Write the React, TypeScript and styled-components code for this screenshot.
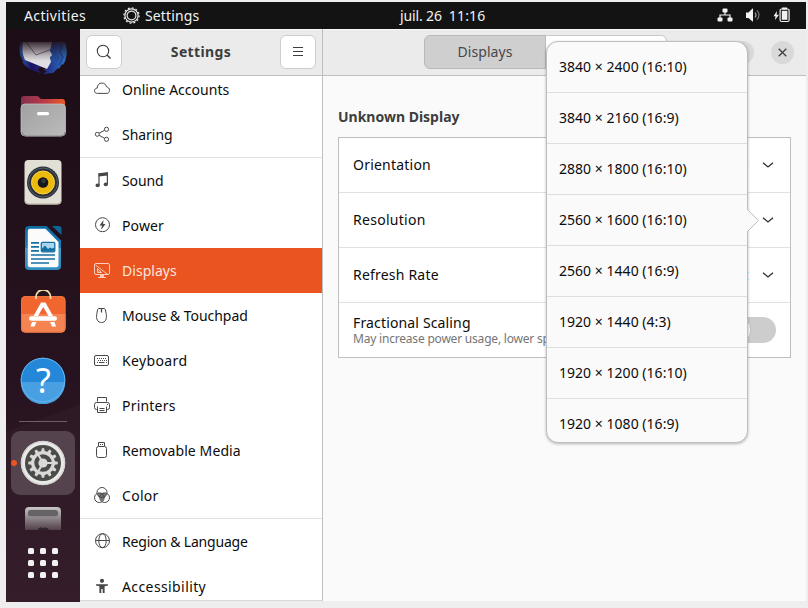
import React from 'react';
import styled, { createGlobalStyle } from 'styled-components';

const GlobalStyle = createGlobalStyle`
  * { box-sizing: border-box; }
  body { margin: 0; background: #eeeeee; font-family: "Noto Sans", "Open Sans", sans-serif; font-size: 14px; color: #0c0c0c; }
  svg { display: block; flex: none; }
`;

const Page = styled.div`
  width: 808px;
  height: 608px;
  padding: 2px 2px 6px 6px;
  overflow: hidden;
`;

const Screen = styled.div`
  position: relative;
  display: flex;
  flex-direction: column;
  width: 800px;
  height: 600px;
  overflow: hidden;
`;

const Label = styled.span<{ $track?: number }>`
  letter-spacing: ${(p) => p.$track ?? 0}px;
  line-height: 20px;
  white-space: pre;
`;

/* ---------- top bar ---------- */

const TopBar = styled.header`
  display: flex;
  align-items: center;
  flex: none;
  height: 27px;
  padding: 0 16px 0 18px;
  background: #131313;
  color: #f2f2f2;
`;

const Activities = styled.div`
  width: 99px;
`;

const AppMenu = styled.div`
  display: flex;
  align-items: center;
  gap: 5px;
  width: 277px;
`;

const Clock = styled.div`
  display: flex;
  gap: 7px;
`;

const Tray = styled.div`
  display: flex;
  align-items: center;
  gap: 12px;
  margin: 0 0 1px auto;
`;

/* ---------- dock ---------- */

const Workspace = styled.div`
  display: flex;
  flex: 1;
  min-height: 0;
`;

const Dock = styled.nav`
  display: flex;
  flex-direction: column;
  align-items: center;
  width: 74px;
  background: linear-gradient(160deg, transparent 67%, rgba(255, 255, 255, 0.025) 67.2%),
    linear-gradient(180deg, #1c0d16 0%, #25121e 50%, #301825 100%);
`;

const Favourites = styled.div`
  display: flex;
  flex-direction: column;
  gap: 18px;
`;

const DockDivider = styled.div`
  width: 48px;
  height: 1px;
  margin: 17px 0 9px;
  background: #6c5f67;
`;

const ActiveApp = styled.div`
  display: flex;
  align-items: center;
  width: 64px;
  height: 64px;
  margin-bottom: 11px;
  border-radius: 9px;
  background: #54424c;
`;

const RunningDot = styled.div`
  width: 6px;
  height: 6px;
  margin-right: 3px;
  border-radius: 50%;
  background: #e95420;
`;

const AppsGrid = styled.div`
  display: grid;
  grid-template-columns: repeat(3, 6px);
  gap: 6px;
  margin-top: 18px;
`;

const GridDot = styled.i`
  height: 6px;
  border-radius: 1.5px;
  background: #f2f2f2;
`;

/* ---------- window ---------- */

const Pane = styled.section`
  display: flex;
  flex-direction: column;
  flex: 1;
  min-width: 0;
  height: 572px;
  background: #fafafa;
`;

const Sidebar = styled(Pane)`
  flex: none;
  width: 243px;
  background: #ffffff;
  border-right: 1px solid #bfbfbf;
  border-bottom: 1px solid #d8d8d8;
`;

const HeaderBar = styled.div`
  display: flex;
  align-items: center;
  justify-content: space-between;
  flex: none;
  height: 47px;
  padding: 0 6px;
  background: #ebebeb;
  border-bottom: 1px solid #bfbfbf;
  box-shadow: inset 0 1px #f9f9f9;
`;

const Title = styled(Label)`
  font-weight: 700;
  color: #3d3d3d;
`;

const IconButton = styled.button`
  display: grid;
  place-items: center;
  width: 36px;
  height: 34px;
  padding: 0;
  border: 1px solid #cdcdcd;
  border-radius: 6px;
  background: #ffffff;
`;

const CategoryList = styled.ul`
  flex: 1;
  min-height: 0;
  margin: 0;
  padding: 0;
  overflow: hidden;
  list-style: none;
`;

const Category = styled.li<{ $active?: boolean; $ruled?: boolean; $first?: boolean }>`
  display: flex;
  align-items: flex-start;
  gap: 12px;
  height: ${(p) => (p.$ruled ? 46 : 45)}px;
  margin-top: ${(p) => (p.$first ? -9 : 0)}px;
  padding: 14px 0 0 14px;
  border-bottom: ${(p) => (p.$ruled ? '1px solid #e1e1e1' : 'none')};
  background: ${(p) => (p.$active ? '#e95420' : 'transparent')};
  color: ${(p) => (p.$active ? '#fbe6de' : '#0c0c0c')};

  svg { color: ${(p) => (p.$active ? '#f8cdbd' : '#484848')}; }
  span { margin-top: -1px; }
`;

const MainHeader = styled(HeaderBar)`
  justify-content: flex-start;
  padding: 0 12px 0 101px;
`;

const Segment = styled.div<{ $on?: boolean }>`
  display: grid;
  place-items: center;
  width: ${(p) => (p.$on ? 122 : 121)}px;
  height: 34px;
  border: 1px solid #b9b9b9;
  border-left-width: ${(p) => (p.$on ? 1 : 0)}px;
  border-color: ${(p) => (p.$on ? '#b9b9b9' : '#c9c9c9')};
  border-radius: ${(p) => (p.$on ? '6px 0 0 6px' : '0 6px 6px 0')};
  background: ${(p) => (p.$on ? '#cfcfcf' : '#ffffff')};
  color: #484848;
`;

const WindowControls = styled.div`
  display: flex;
  gap: 17px;
  margin-left: auto;
`;

const ControlButton = styled.button`
  display: grid;
  place-items: center;
  width: 23px;
  height: 23px;
  padding: 0;
  border: 0;
  border-radius: 50%;
  background: #d9d9d9;
`;

const Content = styled.div`
  padding: 31px 15px 0;
`;

const Heading = styled(Title)`
  display: block;
`;

const SettingsCard = styled.div`
  margin-top: 10px;
  border: 1px solid #bfbfbf;
  background: #ffffff;
`;

const SettingRow = styled.div`
  display: flex;
  align-items: center;
  height: 55px;
  padding: 0 16px 0 14px;
  border-bottom: 1px solid #e1e1e1;

  &:last-child { height: 54px; border-bottom: 0; padding-right: 14px; }
`;

const SettingText = styled.div`
  display: flex;
  flex-direction: column;
  flex: 1;
`;

const RowTitle = styled(Label)`
  line-height: 18px;
`;

const Hint = styled(Label)`
  font-size: 12px;
  line-height: 14px;
  color: #757575;
`;

const Value = styled(Label)`
  margin-right: 13.5px;
  color: #1a73c0;
`;

const Switch = styled.div`
  width: 48px;
  height: 26px;
  border-radius: 13px;
  background: #cdcdcd;
`;

const Knob = styled.div`
  width: 23px;
  height: 26px;
  border: 1px solid #c0c0c0;
  border-radius: 12px;
  background: #f6f6f6;
`;

/* ---------- resolution menu ---------- */

const Popover = styled.div`
  position: absolute;
  left: 540px;
  top: 39px;
  width: 202px;
  height: 402px;
  border: 1px solid #bebebe;
  border-radius: 12px;
  background: #fafafa;
  box-shadow: 0 1px 3px rgba(0, 0, 0, 0.28);
`;

const Options = styled.div`
  height: 400px;
  overflow: hidden;
  border-radius: 11px;
`;

const Option = styled.div`
  display: flex;
  align-items: center;
  height: 51px;
  padding-left: 12px;
  border-bottom: 1px solid #dedede;
`;

const Arrow = styled.svg`
  position: absolute;
  left: 199px;
  top: 166px;
`;

/* ---------- icons ---------- */

const Line = ({ children }: { children: React.ReactNode }) => (
  <svg width="16" height="16" viewBox="0 0 16 16" fill="none" stroke="currentColor" strokeWidth="1">
    {children}
  </svg>
);

const icons = {
  cloud: (
    <Line>
      <path d="M3.500 12.400C1.600 12.400.5 11.300.5 9.700.5 8.200 1.700 7.200 3.200 7.100 3.200 4 5.200 2 7.900 2c2.400 0 4 1.500 4.600 3.800 1.900.300 3 1.800 3 3.400 0 2-1 3.200-2.600 3.200z" />
    </Line>
  ),
  share: (
    <Line>
      <circle cx="3.300" cy="8.300" r="2" />
      <circle cx="12.500" cy="3.300" r="2.100" />
      <circle cx="12.500" cy="13.300" r="2.100" />
      <path d="M5.100 7.200l5.500-2.900M5.100 9.300l5.500 3" />
    </Line>
  ),
  music: (
    <Line>
      <path d="M5 13.500V1.800l8.400-.900v11.300" strokeWidth="1.200" />
      <path d="M4.500 1.500l9.400-1v3l-9.400 1z" fill="currentColor" stroke="none" />
      <ellipse cx="3.600" cy="13.400" rx="2.100" ry="1.800" fill="currentColor" stroke="none" />
      <ellipse cx="11.800" cy="12.400" rx="2.100" ry="1.800" fill="currentColor" stroke="none" />
    </Line>
  ),
  power: (
    <Line>
      <circle cx="8.500" cy="7.700" r="7" />
      <path d="M9.500 3L5.500 8.400h2.400l-.7 4.300 4.300-5.600H9.100z" fill="currentColor" stroke="none" />
    </Line>
  ),
  display: (
    <Line>
      <rect x=".5" y="1.500" width="15" height="11" rx="1.500" />
      <path d="M1.500 3l12 9.300M3.500 10.500v-4l4 4zM4.800 9.800v-1" />
      <path d="M6 13h4v2h2v1H4v-1h2z" fill="currentColor" stroke="none" />
    </Line>
  ),
  mouse: (
    <Line>
      <path d="M4.800 1.500Q3.900 1.500 3.600 2.500L2.700 7.500C2 12 3.600 15.500 7.500 15.500s5.500-3.500 4.800-8L11.400 2.500Q11.100 1.500 10.200 1.500z" />
      <path d="M7.500 1.500v4" strokeWidth="1.300" />
    </Line>
  ),
  keyboard: (
    <Line>
      <rect x=".5" y="3.500" width="14" height="10" rx="1.500" />
      <path d="M3 6.500h10M4 8.500h9" strokeDasharray="1 1" />
      <path d="M3 10.500h1M5 10.500h5.500M12 10.500h1" />
    </Line>
  ),
  printer: (
    <Line>
      <path d="M3.500 4.500v-4h9v4M3 12.500H2.500a2 2 0 0 1-2-2v-3a2 2 0 0 1 2-2h11a2 2 0 0 1 2 2v3a2 2 0 0 1-2 2H13M3.500 9.500v6h9v-6M5.500 11.500h5M5.500 13.500h5M13 7.500h1" />
    </Line>
  ),
  usb: (
    <Line>
      <rect x="2.500" y="4.500" width="10" height="11" rx="2" />
      <path d="M4.500 4V.5h6V4M6 2.500h1M8 2.500h1" />
    </Line>
  ),
  color: (
    <Line>
      <circle cx="8" cy="5.500" r="5" />
      <circle cx="5.300" cy="10.700" r="4.800" />
      <circle cx="10.700" cy="10.700" r="4.800" />
      <path d="M3.500 6.500Q8 4.800 12.500 6.500 12.200 10 9.500 11.500L9.600 13.500H6.400L6.500 11.500Q3.800 10 3.500 6.500z" fill="currentColor" stroke="none" opacity=".75" />
    </Line>
  ),
  globe: (
    <Line>
      <circle cx="8.500" cy="7.700" r="7" />
      <ellipse cx="8.500" cy="7.700" rx="3.700" ry="7" />
      <path d="M1.500 7.500h14" />
    </Line>
  ),
  person: (
    <Line>
      <g fill="currentColor" stroke="none">
        <circle cx="8" cy="2.800" r="2.100" />
        <path d="M2 6.300h12v1.300l-3.400.7V15H8.700v-4H7.300v4H5.400V8.300L2 7.600z" />
      </g>
    </Line>
  ),
};

const Chevron = () => (
  <svg width="12" height="8" viewBox="0 0 12 8" fill="none" stroke="#2e2e2e" strokeWidth="1.300">
    <path d="M1 1.800l5 4.200L11 1.800" />
  </svg>
);

const ThunderbirdIcon = () => (
  <svg width="48" height="45" viewBox="0 3 48 45">
    <defs>
      <linearGradient id="tbFade" x1="0" y1="16" x2="0" y2="35" gradientUnits="userSpaceOnUse">
        <stop offset="0" stopColor="#1d0e17" stopOpacity=".85" />
        <stop offset=".7" stopColor="#1d0e17" stopOpacity=".2" />
        <stop offset="1" stopColor="#1d0e17" stopOpacity="0" />
      </linearGradient>
      <linearGradient id="tbBlue" x1="0" y1="0" x2="1" y2="0">
        <stop offset="0" stopColor="#2c5fb0" />
        <stop offset=".25" stopColor="#1c1160" />
        <stop offset=".6" stopColor="#22338c" />
        <stop offset="1" stopColor="#3273c4" />
      </linearGradient>
    </defs>
    <path d="M2 16h44c3 8 2 17-2 23l-1-1-3 5-1-1-5 5-10 1 4-3-4-1 4-2-6-1-4 2 4 4C12 45 5 40 3 35l2 1C0 30-.5 22 2 16z" fill="url(#tbBlue)" />
    <path d="M4 16h29l-2 9 3 4-3 2 1 5-4 7L6 34Q2 26 4 16z" fill="#e0dee2" />
    <path d="M7 16l10 13 16-6" fill="none" stroke="#77747c" />
    <path d="M34 18l4 5-2 4 5 5-3 4-2-3-2 5-3-6 2-3-2-5z" fill="#234f9e" />
    <path d="M43 17l-2 10 3 4-4 8" stroke="#1f4795" strokeWidth="1.500" fill="none" />
    <rect x="-1" y="15" width="50" height="20" fill="url(#tbFade)" />
  </svg>
);

const FilesIcon = () => (
  <svg width="48" height="48" viewBox="0 0 48 48">
    <defs>
      <linearGradient id="fTab"><stop offset="0" stopColor="#83304f" /><stop offset=".5" stopColor="#b8394a" /><stop offset="1" stopColor="#ea5a27" /></linearGradient>
      <linearGradient id="fBody" x1="0" y1="0" x2="1" y2="1"><stop offset="0" stopColor="#a0a0a0" /><stop offset="1" stopColor="#bcbcbc" /></linearGradient>
    </defs>
    <path d="M2 20V7q0-3 3-3h13q1.500 0 2.500 1.500L22 7h21q3 0 3 3v12z" fill="url(#fTab)" />
    <rect x="2" y="12" width="44.500" height="32" rx="4" fill="url(#fBody)" stroke="#c9c9c9" strokeWidth=".7" />
    <path d="M3 40q0 4 4 4h35q4 0 4-4" fill="none" stroke="#858585" />
    <rect x="18" y="20" width="12" height="3.300" rx="1.500" fill="#fff" />
  </svg>
);

const RhythmboxIcon = () => (
  <svg width="48" height="48" viewBox="0 0 48 48">
    <rect x="5.500" y="2" width="37" height="44.500" rx="4" fill="#e2dfd4" />
    <path d="M6 43q1 3 4 3h28q3 0 4-3" fill="none" stroke="#b5b1a5" />
    <circle cx="24" cy="24.500" r="16" fill="#2b3038" />
    <circle cx="24" cy="24.500" r="14.500" fill="none" stroke="#555d68" strokeWidth="1" />
    <circle cx="24" cy="24.500" r="11.500" fill="#ecb90d" stroke="#fad545" />
    <circle cx="24" cy="24.500" r="5.300" fill="#16181c" />
    <circle cx="24.500" cy="23" r="2.200" fill="#353a42" />
  </svg>
);

const WriterIcon = () => (
  <svg width="48" height="48" viewBox="0 0 48 48">
    <defs>
      <linearGradient id="wBody" x1="0" y1="0" x2="0" y2="1"><stop offset="0" stopColor="#0b6ba0" /><stop offset=".5" stopColor="#1a7fb6" /><stop offset=".51" stopColor="#3d9ac8" /><stop offset="1" stopColor="#2f8cbf" /></linearGradient>
    </defs>
    <path d="M10 2h17.500L42 16.500V42q0 4-4 4H10q-4 0-4-4V6q0-4 4-4z" fill="url(#wBody)" />
    <path d="M33 2h7q2.500 0 2.500 2.500V11z" fill="#0d6595" />
    <path d="M11 4.800h15.500L39.500 18v23q0 2.300-2.300 2.300H11Q8.800 43.300 8.800 41V7q0-2.200 2.200-2.200z" fill="#fbfbfb" />
    <path d="M12 18.800h8M12 22.800h8M12 26.800h8M12 31h24M12 35h24M12 39h18" stroke="#1670a4" strokeWidth="1.700" />
    <rect x="22.300" y="18.300" width="13.500" height="9.500" rx="1.200" fill="#abd6ee" stroke="#1670a4" strokeWidth="1.300" />
    <path d="M23 27.500v-3l3-3 3 3.500 2-1.500 2 1 2.500-1v4z" fill="#1670a4" />
  </svg>
);

const SoftwareIcon = () => (
  <svg width="48" height="48" viewBox="0 0 48 48">
    <rect x="2" y="6" width="44.500" height="36.500" rx="4.500" fill="#f1652f" />
    <path d="M2 24h44.500v14q0 4.500-4.500 4.500H6.500Q2 42.500 2 38z" fill="#f58452" />
    <rect x="2.500" y="6.500" width="43.500" height="35.500" rx="4" fill="none" stroke="#e87748" strokeWidth=".8" />
    <path d="M17 9V7a7.200 7.200 0 0 1 14.500 0v2" fill="none" stroke="#f3d9a6" strokeWidth="1.800" />
    <path d="M22 12.500h4.500L34 26h-4.500L24.200 17 19 26h-4.500z" fill="#fff" />
    <rect x="10" y="26.200" width="28" height="4.500" rx="2.200" fill="#fff" />
    <path d="M13 32h4.500l-2 4.500H11.500zM31 32h4.500l1.500 4.500h-4z" fill="#fff" />
  </svg>
);

const HelpGlyph = styled.text`
  font: 400 34px "Noto Sans", sans-serif;
  text-anchor: middle;
  fill: #ffffff;
`;

const HelpIcon = () => (
  <svg width="48" height="48" viewBox="0 0 48 48">
    <circle cx="24" cy="24" r="22.300" fill="#2587d8" />
    <path d="M1.700 26h44.600A22.300 22.300 0 0 1 1.700 26z" fill="#48a0e3" />
    <circle cx="24" cy="24" r="21.800" fill="none" stroke="#66b4ec" />
    <HelpGlyph x="24.500" y="36.800">?</HelpGlyph>
  </svg>
);

const teeth = Array.from({ length: 12 }, (_, i) => i * 30);

const GearAppIcon = () => (
  <svg width="46" height="46" viewBox="0 0 46 46">
    <circle cx="23" cy="23" r="22.300" fill="#e9e9e7" />
    <circle cx="23" cy="23" r="21.500" fill="none" stroke="#cfcfcd" />
    <circle cx="23" cy="23" r="18" fill="#4b4b49" />
    <g fill="#d9d9d6">
      {teeth.map((a) => (
        <path key={a} d="M21 12.500l.8-4.300h2.400l.8 4.300z" transform={`rotate(${a} 23 23)`} />
      ))}
    </g>
    <circle cx="23" cy="23" r="10.300" fill="none" stroke="#d9d9d6" strokeWidth="3.200" />
    <circle cx="23" cy="23" r="4.600" fill="#d9d9d6" />
    <path d="M23 23h10M23 23l-5-8.700M23 23l-5 8.700" stroke="#d9d9d6" strokeWidth="2" />
  </svg>
);

const DriveIcon = () => (
  <svg width="38" height="24" viewBox="0 0 38 24">
    <defs>
      <linearGradient id="dFade" x1="0" y1="0" x2="0" y2="1"><stop offset="0" stopColor="#c9c7c8" /><stop offset=".25" stopColor="#a9a5a7" /><stop offset="1" stopColor="#524049" /></linearGradient>
    </defs>
    <path d="M1 24V5q0-4 4-4h28q4 0 4 4v19z" fill="url(#dFade)" />
    <rect x="4" y="4" width="30" height="6.300" rx="2.500" fill="#656365" />
    <path d="M13.500 24q1.500-3.200 4-2.500l1.500.7 1.500-.7q3-.5 4.500 2.500z" fill="#30252a" />
  </svg>
);

const SettingsGear = () => (
  <svg width="17" height="17" viewBox="0 0 17 17" fill="none" stroke="#e6e6e6">
    <circle cx="8.500" cy="8.500" r="4.400" strokeWidth="1.200" />
    <circle cx="8.500" cy="8.500" r="6.600" strokeWidth="1.200" />
    <circle cx="8.500" cy="8.500" r="7.600" strokeWidth="1.200" strokeDasharray="1.990 1.990" />
  </svg>
);

const TrayIcons = () => (
  <>
    <svg width="16" height="16" viewBox="0 0 16 16">
      <g fill="#f2f2f2">
        <rect x="5.500" y="1.500" width="5" height="4" rx="1" />
        <rect x=".5" y="10.500" width="5" height="4" rx="1" />
        <rect x="10.500" y="10.500" width="5" height="4" rx="1" />
      </g>
      <path d="M8 5v3M3 11V8h10v3" fill="none" stroke="#f2f2f2" strokeWidth="1.200" />
    </svg>
    <svg width="16" height="16" viewBox="0 0 16 16">
      <path d="M1 5.500h2.500L7.500 1.500H8v13h-.5L3.500 11H1z" fill="#f2f2f2" />
      <path d="M10 5.500q2 2.500 0 5" fill="none" stroke="#a0a0a0" strokeWidth="1.200" />
      <path d="M12 3.300q4 4.700 0 9.400" fill="none" stroke="#707070" strokeWidth="1.200" />
    </svg>
    <svg width="17" height="16" viewBox="0 0 17 16">
      <path d="M4 4L.5 9.300h2l-.5 3.700 4-5.300H3.600z" fill="#f2f2f2" />
      <path d="M9 .5h5v2H9z" fill="#f2f2f2" />
      <rect x="7.100" y="2" width="9" height="12.500" rx="1.500" fill="none" stroke="#f2f2f2" strokeWidth="1.200" />
      <rect x="8.800" y="3.800" width="5.600" height="9" fill="#f2f2f2" />
    </svg>
  </>
);

/* ---------- data ---------- */

const categories: { name: string; icon: keyof typeof icons; track: number; ruled?: boolean; active?: boolean }[] = [
  { name: 'Online Accounts', icon: 'cloud', track: 0.02 },
  { name: 'Sharing', icon: 'share', track: -0.04, ruled: true },
  { name: 'Sound', icon: 'music', track: -0.11 },
  { name: 'Power', icon: 'power', track: 0.11 },
  { name: 'Displays', icon: 'display', track: 0.04, active: true },
  { name: 'Mouse & Touchpad', icon: 'mouse', track: -0.03 },
  { name: 'Keyboard', icon: 'keyboard', track: 0.36 },
  { name: 'Printers', icon: 'printer', track: 0.2 },
  { name: 'Removable Media', icon: 'usb', track: 0.1 },
  { name: 'Color', icon: 'color', track: 0.28, ruled: true },
  { name: 'Region & Language', icon: 'globe', track: -0.19 },
  { name: 'Accessibility', icon: 'person', track: 0.4 },
];

const settings = [
  { name: 'Orientation', track: 0.22, value: 'Landscape' },
  { name: 'Resolution', track: 0.28, value: '' },
  { name: 'Refresh Rate', track: 0.2, value: '60.00 Hz' },
];

const resolutions = [
  '3840 × 2400 (16:10)',
  '3840 × 2160 (16:9)',
  '2880 × 1800 (16:10)',
  '2560 × 1600 (16:10)',
  '2560 × 1440 (16:9)',
  '1920 × 1440 (4:3)',
  '1920 × 1200 (16:10)',
  '1920 × 1080 (16:9)',
];

export default function App() {
  return (
    <Page>
      <GlobalStyle />
      <Screen>
        <TopBar>
          <Activities><Label $track={0.38}>Activities</Label></Activities>
          <AppMenu>
            <SettingsGear />
            <Label $track={0.13}>Settings</Label>
          </AppMenu>
          <Clock>
            <Label $track={-0.13}>juil. 26</Label>
            <Label $track={0.15}>11:16</Label>
          </Clock>
          <Tray><TrayIcons /></Tray>
        </TopBar>

        <Workspace>
          <Dock>
            <Favourites>
              <ThunderbirdIcon />
              <FilesIcon />
              <RhythmboxIcon />
              <WriterIcon />
              <SoftwareIcon />
              <HelpIcon />
            </Favourites>
            <DockDivider />
            <ActiveApp>
              <RunningDot />
              <GearAppIcon />
            </ActiveApp>
            <DriveIcon />
            <AppsGrid>
              {teeth.slice(0, 9).map((n) => <GridDot key={n} />)}
            </AppsGrid>
          </Dock>

          <Sidebar>
            <HeaderBar>
              <IconButton aria-label="Search">
                <svg width="16" height="16" viewBox="0 0 16 16" fill="none" stroke="#3d3d3d" strokeWidth="1.100">
                  <circle cx="7" cy="7" r="5.700" />
                  <path d="M11 11l3.500 3.500" strokeWidth="1.400" />
                </svg>
              </IconButton>
              <Title $track={0.38}>Settings</Title>
              <IconButton aria-label="Menu">
                <svg width="10" height="10" viewBox="0 0 10 10" stroke="#3d3d3d">
                  <path d="M0 .5h10M0 4.500h10M0 8.500h10" />
                </svg>
              </IconButton>
            </HeaderBar>
            <CategoryList>
              {categories.map((c, i) => (
                <Category key={c.name} $active={c.active} $ruled={c.ruled} $first={i === 0}>
                  {icons[c.icon]}
                  <Label $track={c.track}>{c.name}</Label>
                </Category>
              ))}
            </CategoryList>
          </Sidebar>

          <Pane>
            <MainHeader>
              <Segment $on><Label $track={0.04}>Displays</Label></Segment>
              <Segment />
              <WindowControls>
                <ControlButton aria-label="Minimize" />
                <ControlButton aria-label="Maximize" />
                <ControlButton aria-label="Close">
                  <svg width="9" height="9" viewBox="0 0 9 9" stroke="#3d3d3d" strokeWidth="1.300">
                    <path d="M.7.7l7.600 7.600M8.300.7L.7 8.300" />
                  </svg>
                </ControlButton>
              </WindowControls>
            </MainHeader>
            <Content>
              <Heading>Unknown Display</Heading>
              <SettingsCard>
                {settings.map((s) => (
                  <SettingRow key={s.name}>
                    <SettingText><Label $track={s.track}>{s.name}</Label></SettingText>
                    {s.value && <Value>{s.value}</Value>}
                    <Chevron />
                  </SettingRow>
                ))}
                <SettingRow>
                  <SettingText>
                    <RowTitle $track={0.15}>Fractional Scaling</RowTitle>
                    <Hint $track={-0.2}>May increase power usage, lower sp</Hint>
                  </SettingText>
                  <Switch><Knob /></Switch>
                </SettingRow>
              </SettingsCard>
            </Content>
          </Pane>
        </Workspace>

        <Popover>
          <Options>
            {resolutions.map((r) => (
              <Option key={r}><Label $track={0.03}>{r}</Label></Option>
            ))}
          </Options>
          <Arrow width="14" height="25" viewBox="0 0 14 25">
            <path d="M0 1.500h1L12 12.500 1 23.500H0z" fill="#fafafa" />
            <path d="M1.500 1.500L12.500 12.500 1.500 23.500" fill="none" stroke="#bebebe" />
          </Arrow>
        </Popover>
      </Screen>
    </Page>
  );
}
